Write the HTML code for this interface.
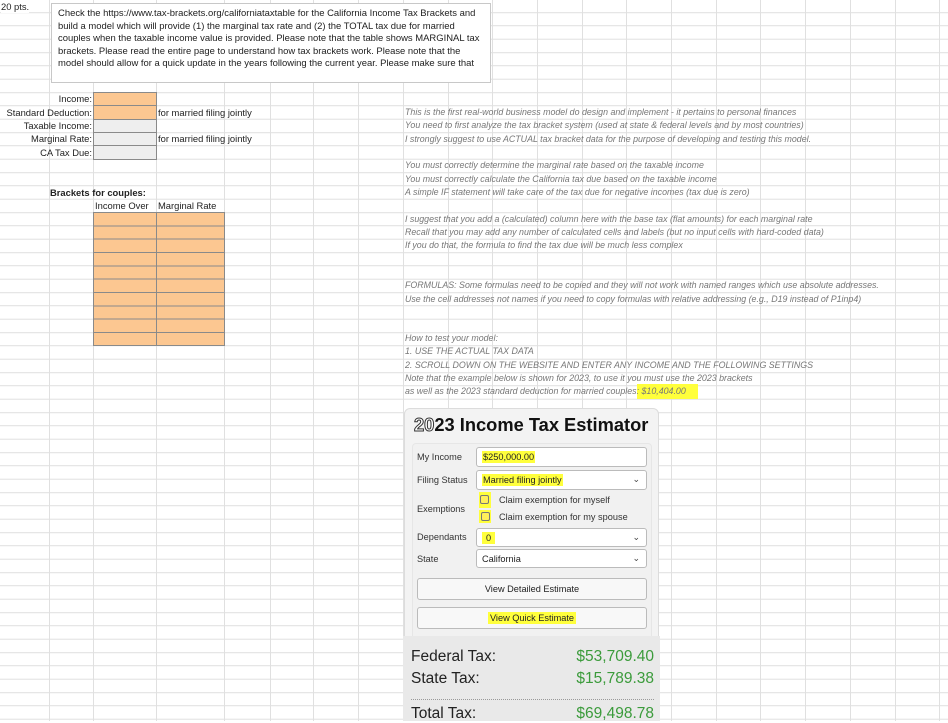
<!DOCTYPE html>
<html><head><meta charset="utf-8"><style>
*{margin:0;padding:0;box-sizing:border-box}
body{width:948px;height:721px;overflow:hidden;background:#fff;position:relative;font-family:"Liberation Sans",sans-serif;}
.grid{position:absolute;left:0;top:0;width:948px;height:721px;
background-image:repeating-linear-gradient(to bottom,transparent 0,transparent 12.33px,#e0e0e0 12.33px,#e0e0e0 13.333px);
background-position:0 -0.3px;}
.v{position:absolute;top:0;height:721px;width:1px;background:#e0e0e0}
.a{position:absolute;font-size:9.4px;color:#222;white-space:nowrap;line-height:13px}
.r{text-align:right}
.it{position:absolute;left:405px;font-size:8.85px;font-style:italic;color:#777;white-space:nowrap;line-height:13px}
.cell{position:absolute;background:#fcc791;border:1px solid #8a8a8a}
.gc{position:absolute;background:#eeeeee;border:1px solid #8a8a8a}
.hl{background:#ffff3c}
.w{position:absolute;left:404px;top:408px;width:255px;height:240px;background:#f3f3f3;border:1px solid #dcdcdc;border-radius:6px}
.lbl{position:absolute;left:417px;font-size:9.2px;color:#333}
.in{position:absolute;left:476px;width:171px;height:20px;background:#fff;border:1px solid #bbb;border-radius:3px;font-size:9.2px;color:#222;padding:4px 5px}
.chev{position:absolute;right:6px;top:3px;font-size:9px;color:#444}
.btn{position:absolute;left:417px;width:230px;height:22px;background:#f8f8f8;border:1px solid #bbb;border-radius:3px;font-size:9.2px;color:#222;text-align:center;line-height:20px}
.res{position:absolute;left:403px;top:636px;width:257px;height:85px;background:#e9e9e9}
.rl{position:absolute;left:8px;font-size:15.5px;color:#222}
.rv{position:absolute;right:6px;font-size:15.5px;color:#3b9b3b}
</style></head><body>
<div class="grid"></div>
<div class="v" style="left:49px"></div><div class="v" style="left:93px"></div><div class="v" style="left:156px"></div>
<div class="v" style="left:224px"></div><div class="v" style="left:270px"></div><div class="v" style="left:313px"></div>
<div class="v" style="left:358px"></div><div class="v" style="left:403px"></div><div class="v" style="left:448px"></div>
<div class="v" style="left:492px"></div><div class="v" style="left:537px"></div><div class="v" style="left:582px"></div>
<div class="v" style="left:626px"></div><div class="v" style="left:671px"></div><div class="v" style="left:716px"></div>
<div class="v" style="left:760px"></div><div class="v" style="left:805px"></div><div class="v" style="left:850px"></div>
<div class="v" style="left:895px"></div><div class="v" style="left:939px"></div>

<div class="a" style="left:1px;top:0;background:#fff">20 pts.</div>
<div style="position:absolute;left:51px;top:3px;width:440px;height:80px;background:#fff;border:1px solid #c8c8c8;font-size:9.45px;line-height:12.6px;color:#222;padding:4px 6px;white-space:nowrap;overflow:hidden">Check the https://www.tax-brackets.org/californiataxtable for the California Income Tax Brackets and<br>build a model which will provide (1) the marginal tax rate and (2) the TOTAL tax due for married<br>couples when the taxable income value is provided. Please note that the table shows MARGINAL tax<br>brackets. Please read the entire page to understand how tax brackets work. Please note that the<br>model should allow for a quick update in the years following the current year. Please make sure that</div>

<div class="a r" style="right:856px;top:92px">Income:</div>
<div class="a r" style="right:856px;top:106px">Standard Deduction:</div>
<div class="a r" style="right:856px;top:119px">Taxable Income:</div>
<div class="a r" style="right:856px;top:132px">Marginal Rate:</div>
<div class="a r" style="right:856px;top:146px">CA Tax Due:</div>
<div class="cell" style="left:93px;top:92px;width:64px;height:14.3px"></div>
<div class="cell" style="left:93px;top:105.3px;width:64px;height:14.3px"></div>
<div class="gc" style="left:93px;top:118.7px;width:64px;height:14.3px"></div>
<div class="gc" style="left:93px;top:132px;width:64px;height:14.3px"></div>
<div class="gc" style="left:93px;top:145.3px;width:64px;height:14.3px"></div>
<div class="a" style="left:158px;top:106px">for married filing jointly</div>
<div class="a" style="left:158px;top:132px">for married filing jointly</div>
<div class="a" style="left:50px;top:186px;font-weight:bold">Brackets for couples:</div>
<div class="a" style="left:95px;top:199px">Income Over</div>
<div class="a" style="left:158px;top:199px">Marginal Rate</div>
<div style="position:absolute;left:93px;top:212px;width:132px;height:133.5px;background:#fcc791;border:1px solid #8a8a8a;
background-image:repeating-linear-gradient(to bottom,transparent 0,transparent 12.33px,#8a8a8a 12.33px,#8a8a8a 13.333px)"></div>
<div style="position:absolute;left:156px;top:212px;width:1px;height:133px;background:#8a8a8a"></div>

<div class="it" style="top:106px">This is the first real-world business model do design and implement - it pertains to personal finances</div>
<div class="it" style="top:119.3px">You need to first analyze the tax bracket system (used at state &amp; federal levels and by most countries)</div>
<div class="it" style="top:132.7px">I strongly suggest to use ACTUAL tax bracket data for the purpose of developing and testing this model.</div>
<div class="it" style="top:159.3px">You must correctly determine the marginal rate based on the taxable income</div>
<div class="it" style="top:172.7px">You must correctly calculate the California tax due based on the taxable income</div>
<div class="it" style="top:186px">A simple IF statement will take care of the tax due for negative incomes (tax due is zero)</div>
<div class="it" style="top:212.7px">I suggest that you add a (calculated) column here with the base tax (flat amounts) for each marginal rate</div>
<div class="it" style="top:226px">Recall that you may add any number of calculated cells and labels (but no input cells with hard-coded data)</div>
<div class="it" style="top:239.3px">If you do that, the formula to find the tax due will be much less complex</div>
<div class="it" style="top:279.3px">FORMULAS: Some formulas need to be copied and they will not work with named ranges which use absolute addresses.</div>
<div class="it" style="top:292.7px">Use the cell addresses not names if you need to copy formulas with relative addressing (e.g., D19 instead of P1inp4)</div>
<div class="it" style="top:332px">How to test your model:</div>
<div class="it" style="top:345.3px">1. USE THE ACTUAL TAX DATA</div>
<div class="it" style="top:358.7px">2. SCROLL DOWN ON THE WEBSITE AND ENTER ANY INCOME AND THE FOLLOWING SETTINGS</div>
<div class="it" style="top:372px">Note that the example below is shown for 2023, to use it you must use the 2023 brackets</div>
<div class="it" style="top:385.3px">as well as the 2023 standard deduction for married couples<span class="hl" style="padding:2px 12px 3px 0">: $10,404.00</span></div>

<div class="w">
<div style="position:absolute;left:9px;top:5px;font-size:18.3px;font-weight:bold;color:#111;white-space:nowrap"><span style="color:#fff;-webkit-text-stroke:1px #333">20</span>23 Income Tax Estimator</div>
<div style="position:absolute;left:7px;top:34px;width:240px;height:200px;background:#f1f1f1;border:1px solid #e6e6e6;border-radius:4px"></div>
</div>
<div class="lbl" style="top:452px">My Income</div>
<div class="in" style="top:447px"><span class="hl" style="padding:1px">$250,000.00</span></div>
<div class="lbl" style="top:475px">Filing Status</div>
<div class="in" style="top:470px"><span class="hl" style="padding:1px">Married filing jointly</span><span class="chev">&#8964;</span></div>
<div class="lbl" style="top:504px">Exemptions</div>
<div style="position:absolute;left:479px;top:492px;width:12px;height:16px;background:#ffff3c"></div>
<div style="position:absolute;left:480px;top:495px;width:9px;height:9px;border:1px solid #777;border-radius:2px;background:#ffef5a"></div>
<div style="position:absolute;left:479px;top:510px;width:12px;height:13px;background:#ffff3c"></div>
<div style="position:absolute;left:481px;top:512px;width:9px;height:9px;border:1px solid #777;border-radius:2px;background:#ffef5a"></div>
<div class="lbl" style="left:499px;top:495px">Claim exemption for myself</div>
<div class="lbl" style="left:499px;top:512px">Claim exemption for my spouse</div>
<div class="lbl" style="top:532px">Dependants</div>
<div class="in" style="top:528px;height:19px"><span class="hl" style="padding:1px 4px">0</span><span class="chev">&#8964;</span></div>
<div class="lbl" style="top:554px">State</div>
<div class="in" style="top:549px;height:19px">California<span class="chev">&#8964;</span></div>
<div class="btn" style="top:578px">View Detailed Estimate</div>
<div class="btn" style="top:607px"><span class="hl" style="padding:1px 2px">View Quick Estimate</span></div>

<div class="res">
<div class="rl" style="top:12px">Federal Tax:</div><div class="rv" style="top:12px">$53,709.40</div>
<div class="rl" style="top:34px">State Tax:</div><div class="rv" style="top:34px">$15,789.38</div>
<div style="position:absolute;left:8px;right:6px;top:63px;border-top:1px dotted #999"></div>
<div class="rl" style="top:69px">Total Tax:</div><div class="rv" style="top:69px">$69,498.78</div>
</div>
</body></html>
